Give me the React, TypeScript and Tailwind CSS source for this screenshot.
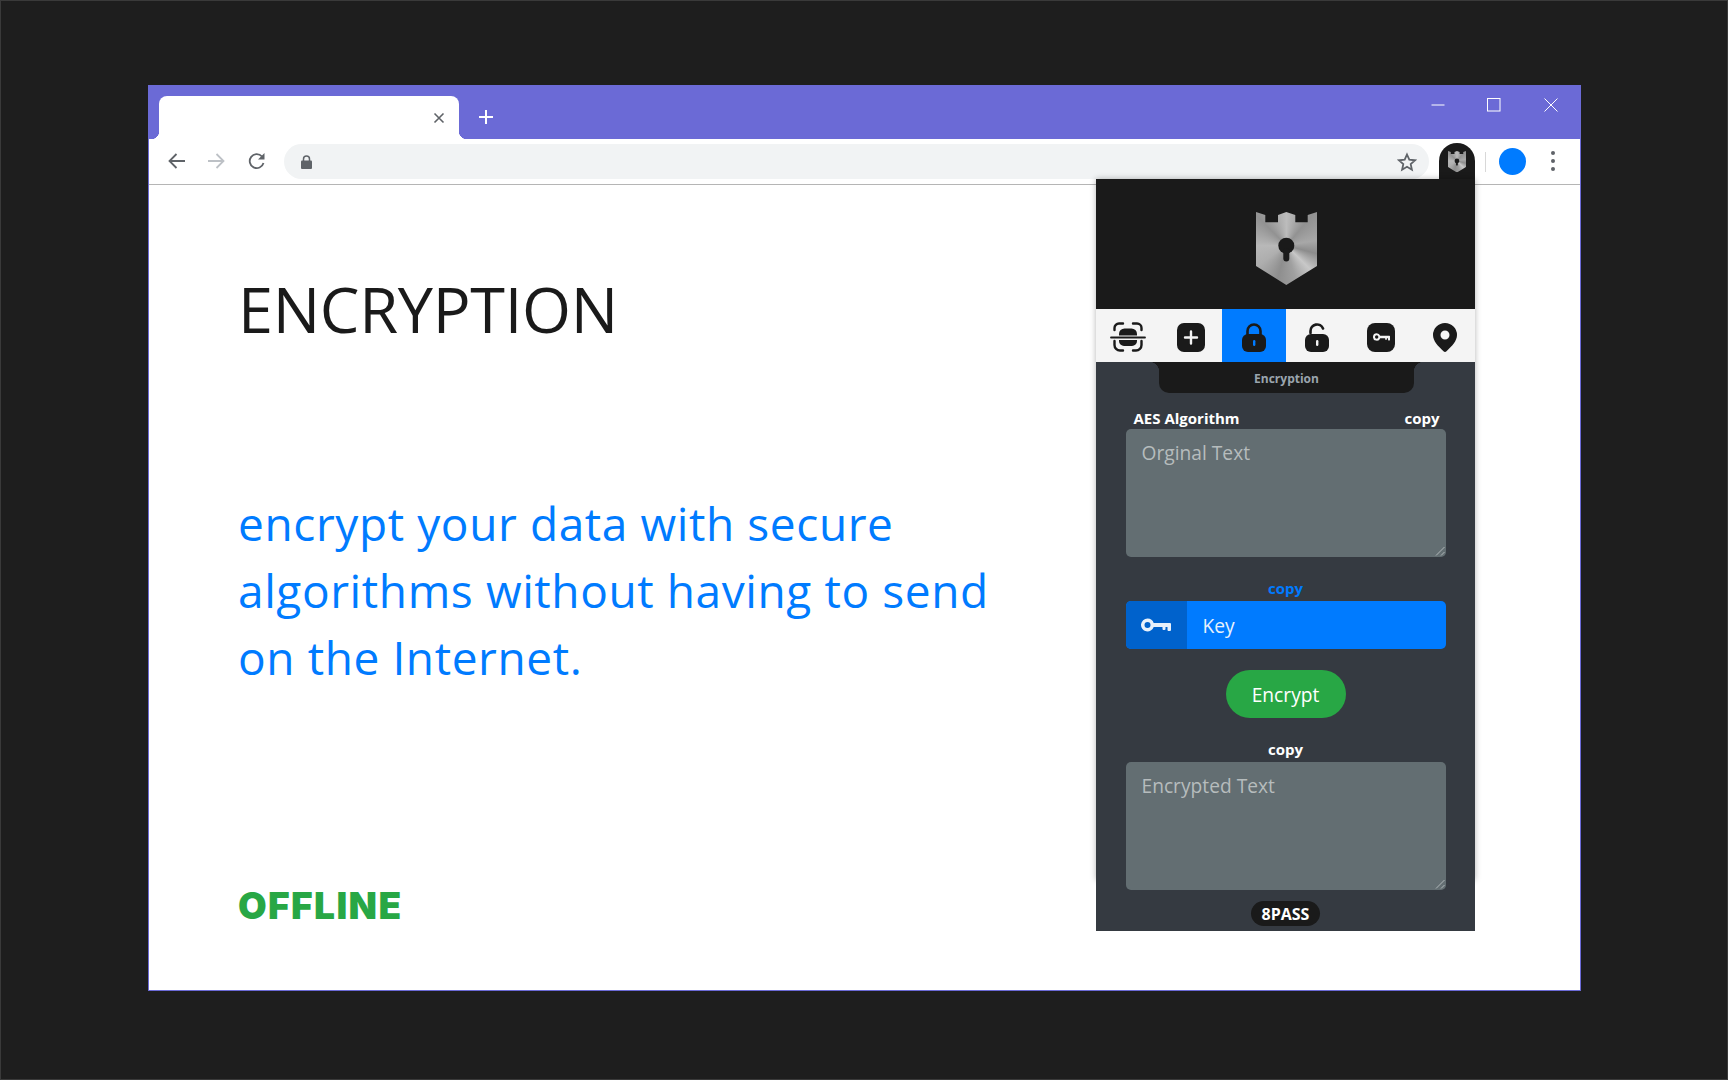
import React from 'react';

const sans = "font-['Open_Sans','Noto_Sans',sans-serif]";

const Logo = ({ size, id }: { size: number; id: string }) => (
  <svg width={size} height={size * 73 / 61} viewBox="0 0 61 73">
    <defs>
      <clipPath id={id}>
        <path d="M0 0L9.3 3V10.3H22V3L30.3 0L39.3 3V10.3H51.7V3L61 0V54L30.3 73L0 54Z" />
      </clipPath>
    </defs>
    <foreignObject width="61" height="73" clipPath={`url(#${id})`}>
      <div className="w-[61px] h-[73px] bg-[conic-gradient(at_50%_46%,#bcbcbc_0deg,#929292_40deg,#a8a8a8_80deg,#8c8c8c_105deg,#c8c8c8_135deg,#a0a0a0_165deg,#8e8e8e_195deg,#aeaeae_235deg,#b8b8b8_270deg,#929292_315deg,#bcbcbc_360deg)]" />
    </foreignObject>
    <circle cx="30.3" cy="33.7" r="8" fill="#1a1a1a" />
    <rect x="27.3" y="36" width="6" height="13.5" rx="3" fill="#1a1a1a" />
  </svg>
);

const ScanIcon = () => (
  <svg width="36" height="30" viewBox="0 0 36 30" fill="none" stroke="#1a1a1a" strokeWidth="2.4" strokeLinecap="round">
    <path d="M4.500 8V6a4.500 4.500 0 0 1 4.500-4.500h4M23 1.500h4a4.500 4.500 0 0 1 4.500 4.500v2M4.500 19v4a5.500 5.500 0 0 0 5.500 5.500h3M23 28.500h3a5.500 5.500 0 0 0 5.500-5.500v-4" />
    <path d="M1 15.500h34" strokeWidth="1.800" />
    <path d="M9 13.500V12a5.500 5.500 0 0 1 5.500-5.500h7a5.500 5.500 0 0 1 5.500 5.500v1.500zM9 18h18v1a5 5 0 0 1-5 5h-8a5 5 0 0 1-5-5z" fill="#1a1a1a" stroke="none" />
  </svg>
);

const PlusIcon = () => (
  <svg width="28" height="29" viewBox="0 0 28 29">
    <rect width="28" height="29" rx="7" fill="#1a1a1a" />
    <path d="M14 8.5v12M8 14.5h12" stroke="#f4f4f4" strokeWidth="2.4" strokeLinecap="round" />
  </svg>
);

const LockIcon = () => (
  <svg width="24" height="29" viewBox="0 0 24 29">
    <path d="M5.5 13V8a6.500 6.500 0 0 1 13 0v5" fill="none" stroke="#1a1a1a" strokeWidth="2.600" />
    <rect y="11" width="24" height="18" rx="6" fill="#1a1a1a" />
    <rect x="11" y="17" width="2.400" height="6" rx="1.200" fill="#007bff" />
  </svg>
);

const UnlockIcon = () => (
  <svg width="24" height="29" viewBox="0 0 24 29">
    <path d="M5.500 10V8a6.500 6.500 0 0 1 12.500-2.500" fill="none" stroke="#1a1a1a" strokeWidth="2.600" strokeLinecap="round" />
    <rect y="11" width="24" height="18" rx="6" fill="#1a1a1a" />
    <rect x="11" y="17" width="2.400" height="6" rx="1.200" fill="#f4f4f4" />
  </svg>
);

const KeyGlyph = ({ color }: { color: string }) => (
  <svg width="30" height="14" viewBox="0 0 30 14" fill={color}>
    <path fillRule="evenodd" d="M6.500 0.500a6.500 6.500 0 0 1 6.200 4.500H29a1 1 0 0 1 1 1v6a1 1 0 0 1-1 1h-1.500a1 1 0 0 1-1-1v-3h-2v2a1 1 0 0 1-1 1h-1a1 1 0 0 1-1-1v-2h-8.800a6.500 6.500 0 1 1-6.200-8.500zM6.500 4a3 3 0 1 0 0 6a3 3 0 0 0 0-6z" />
  </svg>
);

const KeyBoxIcon = () => (
  <div className="ml-[2px] w-[28px] h-[29px] rounded-[8px] bg-[#1a1a1a] flex items-center justify-center">
    <svg width="17" height="8" viewBox="0 0 30 14" fill="#f4f4f4">
      <path fillRule="evenodd" d="M6.500 0.500a6.500 6.500 0 0 1 6.200 4.500H29a1 1 0 0 1 1 1v6a1 1 0 0 1-1 1h-1.500a1 1 0 0 1-1-1v-3h-2v2a1 1 0 0 1-1 1h-1a1 1 0 0 1-1-1v-2h-8.800a6.500 6.500 0 1 1-6.200-8.500zM6.500 4a3 3 0 1 0 0 6a3 3 0 0 0 0-6z" />
    </svg>
  </div>
);

const PinIcon = () => (
  <svg className="ml-[4px]" width="24" height="29" viewBox="0 0 24 29">
    <path fillRule="evenodd" fill="#1a1a1a" d="M12 0a12 12 0 0 1 12 12c0 6-5 11-10.500 16.300a2.200 2.200 0 0 1-3 0C5 23 0 18 0 12A12 12 0 0 1 12 0zM12 7.500a4.500 4.500 0 1 0 0 9a4.500 4.500 0 0 0 0-9z" />
  </svg>
);

const ResizeGrip = () => (
  <svg className="absolute right-[1px] bottom-[1px]" width="10" height="10" viewBox="0 0 10 10" stroke="#b0b6b8" strokeWidth="1">
    <path d="M1 9.500L9.500 1M6 9.500L9.500 6" />
  </svg>
);

const FakeTextarea = ({ placeholder }: { placeholder: string }) => (
  <div className="relative w-full h-[128px] rounded-[5px] bg-[#636e72] px-[16px] py-[9px] text-[19.200px] leading-[30px] text-[#b6bcbd]">
    {placeholder}
    <ResizeGrip />
  </div>
);

const tabs = [
  { icon: <ScanIcon /> },
  { icon: <PlusIcon /> },
  { icon: <LockIcon />, active: true },
  { icon: <UnlockIcon /> },
  { icon: <KeyBoxIcon /> },
  { icon: <PinIcon /> },
];

const Popup = () => (
  <div className={`absolute left-[947px] top-[93px] w-[379px] h-[701px] shadow-[0_0_6px_rgba(0,0,0,0.3)] ${sans}`}>
    <div className="flex justify-center items-center h-[130px] pt-[8px] pl-[2px] bg-[#1a1a1a]">
      <Logo size={61} id="logo-big" />
    </div>
    <div className="flex h-[53px] bg-[#f4f4f4]">
      {tabs.map((t, i) => (
        <div key={i} className={`flex-1 flex items-center justify-center pt-[3px] ${t.active ? 'bg-[#007bff]' : ''}`}>
          {t.icon}
        </div>
      ))}
    </div>
    <div className="relative h-[569px] bg-[#353a41] flex flex-col items-center text-white">
      <div className="relative ml-[2px] w-[255px] h-[31px] pt-[2px] rounded-b-[10px] bg-[#1a1a1a] flex items-center justify-center text-[12px] font-bold text-[#9aa5ae]">
        <span className="absolute left-[-10px] top-0 w-[10px] h-[10px] bg-[radial-gradient(circle_at_0_100%,transparent_10px,#1a1a1a_10.500px)]" />
        <span className="absolute right-[-10px] top-0 w-[10px] h-[10px] bg-[radial-gradient(circle_at_100%_100%,transparent_10px,#1a1a1a_10.500px)]" />
        Encryption
      </div>
      <div className="w-[320px] mt-[15px] flex flex-col items-center">
        <div className="w-full flex justify-between items-center pl-[8px] pr-[6px] h-[21px] text-[15px] font-bold leading-[21px]">
          <span>AES Algorithm</span>
          <span>copy</span>
        </div>
        <FakeTextarea placeholder="Orginal Text" />
        <div className="mt-[20px] h-[24px] text-[15px] font-bold leading-[23px] text-[#007bff]">copy</div>
        <div className="w-full h-[48px] flex rounded-[5px] overflow-hidden bg-[#007bff]">
          <div className="w-[61px] bg-[#0062cc] flex items-center justify-center">
            <KeyGlyph color="#e8f1fb" />
          </div>
          <div className="pl-[16px] pt-[2px] flex items-center text-[19.200px] text-[#e8f1fb]">Key</div>
        </div>
        <div className="mt-[21px] w-[120px] h-[48px] pt-[2px] rounded-full bg-[#28a745] flex items-center justify-center text-[19.200px] text-white">Encrypt</div>
        <div className="mt-[20px] h-[24px] text-[15px] font-bold leading-[23px]">copy</div>
        <FakeTextarea placeholder="Encrypted Text" />
        <div className="mt-[11px] w-[69px] h-[25px] rounded-full bg-[#1a1a1a] flex items-center justify-center text-[16px] font-bold">8PASS</div>
      </div>
    </div>
  </div>
);

const Chrome = () => (
  <div className="shrink-0">
    <div className="relative h-[53px] bg-[#6b6ad6] flex items-end pl-[10px]">
      <div className="relative w-[300px] h-[43px] bg-white rounded-t-[8px] flex items-center justify-end pr-[14px]">
        <span className="absolute left-[-8px] bottom-0 w-[8px] h-[8px] bg-[radial-gradient(circle_at_0_0,transparent_8px,#fff_8.500px)]" />
        <span className="absolute right-[-8px] bottom-0 w-[8px] h-[8px] bg-[radial-gradient(circle_at_100%_0,transparent_8px,#fff_8.500px)]" />
        <svg width="12" height="12" viewBox="0 0 12 12" stroke="#5f6368" strokeWidth="1.600"><path d="M1.500 1.500l9 9M10.500 1.500l-9 9" /></svg>
      </div>
      <svg className="ml-[19px] mb-[14px]" width="16" height="16" viewBox="0 0 16 16" stroke="#fff" strokeWidth="2"><path d="M8 1v14M1 8h14" /></svg>
      <div className="ml-auto self-start flex items-center h-[38px] pr-[22px]">
        <svg width="14" height="14" viewBox="0 0 14 14" stroke="#fff" strokeWidth="1"><path d="M0.500 7h13" /></svg>
        <svg className="ml-[42px]" width="14" height="14" viewBox="0 0 14 14" stroke="#fff" strokeWidth="1" fill="none"><rect x="0.500" y="0.500" width="12.500" height="12.500" /></svg>
        <svg className="ml-[43px]" width="14" height="14" viewBox="0 0 14 14" stroke="#fff" strokeWidth="1"><path d="M0.500 0.500l13 13M13.500 0.500l-13 13" /></svg>
      </div>
    </div>
    <div className="h-[46px] bg-white border-b border-[#b5b5b5] flex items-center pl-[18px] pr-[25px]">
      <svg className="mb-[2px]" width="20" height="20" viewBox="0 0 20 20" fill="none" stroke="#5f6368" strokeWidth="1.800"><path d="M18 10H3M9.500 3L2.500 10l7 7" /></svg>
      <svg className="ml-[19px] mb-[2px]" width="20" height="20" viewBox="0 0 20 20" fill="none" stroke="#bdc1c6" strokeWidth="1.800"><path d="M2 10h15M10.500 3l7 7-7 7" /></svg>
      <svg className="ml-[21px] mb-[2px]" width="20" height="20" viewBox="0 0 20 20" fill="none" stroke="#5f6368" strokeWidth="1.800"><path d="M16.500 12a7 7 0 1 1-1.500-6.500" /><path d="M17.500 2v6.500H11z" fill="#5f6368" stroke="none" /></svg>
      <div className="ml-[17px] flex-1 h-[35px] rounded-full bg-[#f1f3f4] flex items-center justify-between pl-[17px] pr-[12px]">
        <svg width="11" height="14" viewBox="0 0 11 14"><path d="M2.500 6V4a3 3 0 0 1 6 0v2" fill="none" stroke="#5f6368" strokeWidth="1.500" /><rect y="5.500" width="11" height="8.500" rx="1" fill="#5f6368" /></svg>
        <svg width="20" height="20" viewBox="0 0 20 20" fill="none" stroke="#5f6368" strokeWidth="1.800"><path d="M10 2.500l2.300 5.200 5.700.6-4.300 3.800 1.200 5.600L10 14.800l-4.900 2.900 1.200-5.600L2 8.300l5.700-.6z" /></svg>
      </div>
      <div className="ml-[10px] w-[36px] h-[41px] mt-[4px] self-start rounded-t-full bg-[#1a1a1a] flex justify-center pt-[8px]">
        <Logo size={18} id="logo-small" />
      </div>
      <div className="ml-[10px] w-px h-[20px] bg-[#d8d8d8]" />
      <div className="ml-[13px] w-[27px] h-[27px] rounded-full bg-[#007bff]" />
      <div className="ml-[25px] mb-[2px] flex flex-col gap-[4px]">
        <span className="w-[4px] h-[4px] rounded-full bg-[#5f6368]" />
        <span className="w-[4px] h-[4px] rounded-full bg-[#5f6368]" />
        <span className="w-[4px] h-[4px] rounded-full bg-[#5f6368]" />
      </div>
    </div>
  </div>
);

export default function App() {
  return (
    <div className="w-[1728px] h-[1080px] bg-[#1e1e1e] border border-[#3a3a3a] pt-[84px] pl-[147px]">
      <div className="relative w-[1433px] h-[906px] bg-white border border-[#6b6ad6] flex flex-col">
        <Chrome />
        <div className={`flex-1 pl-[89px] pt-[84px] ${sans}`}>
          <h1 className="text-[63px] leading-[80px] font-normal tracking-[-0.3px] text-[#1a1a1a]">ENCRYPTION</h1>
          <p className="mt-[141px] w-[840px] text-[46px] leading-[67.200px] tracking-[0.6px] text-[#007bff]">
            encrypt your data with secure<br />algorithms without having to send<br />on the Internet.
          </p>
          <div className="mt-[190px] font-['Inter','Open_Sans',sans-serif] text-[37px] leading-[48px] tracking-[1.4px] font-black text-[#28a745]">OFFLINE</div>
        </div>
        <Popup />
      </div>
    </div>
  );
}
